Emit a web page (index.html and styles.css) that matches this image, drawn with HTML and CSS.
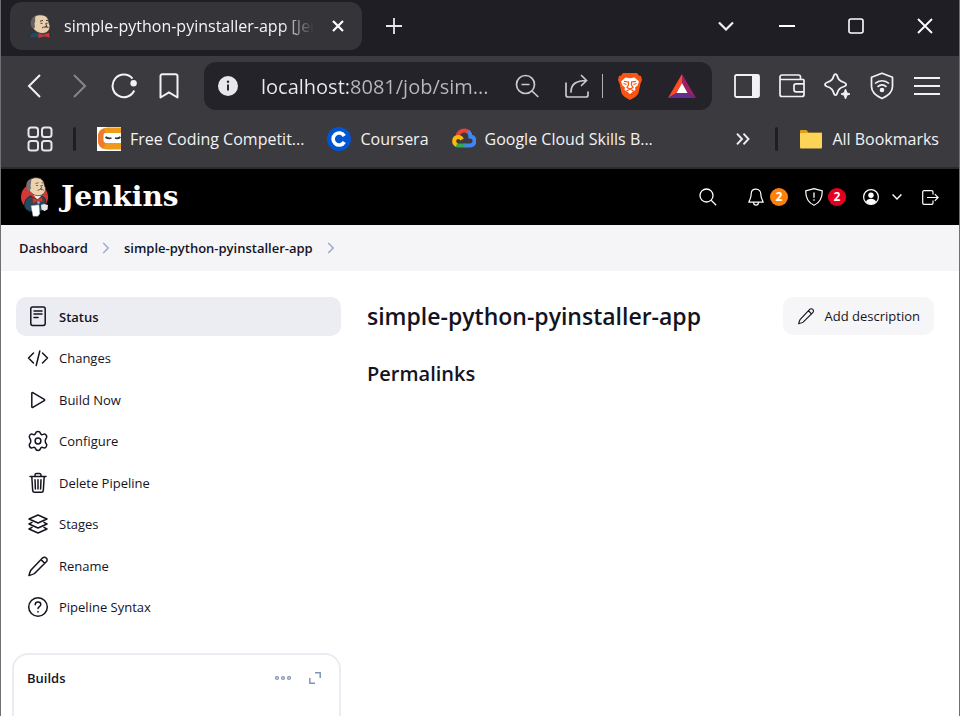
FILE: index.html
```html
<!DOCTYPE html>
<html lang="en">
<head>
<meta charset="utf-8">
<meta name="viewport" content="width=device-width, initial-scale=1">
<title>simple-python-pyinstaller-app [Jenkins]</title>
<link rel="stylesheet" href="styles.css">
</head>
<body>
<div class="window">
  <div class="tabstrip">
    <div class="tab">
      <svg class="favicon" width="24" height="24" viewBox="0 0 24 24" aria-hidden="true">
        <path d="M1 24c0-3 2-5.500 6-6l14 1c2 1 2 3 2 5z" fill="#27485c" stroke="#182a35" stroke-width=".6"/>
        <path d="M4 10C3.500 4 7 .8 12 .8c6 0 8.500 3 8.700 7 .1 1.500 1.500 3 1.200 5.500-.5 3.500-3 6-7 6.200C9 19.500 4.500 16 4 10z" fill="#e8cfae" stroke="#3a3230" stroke-width=".8"/>
        <path d="M3.500 13C1.500 8 3.500 3 7.500 2 6.500 5 8 7 6.500 9.500L7 13l-1.500 2z" fill="#66605e"/>
        <path d="M12 7.200l3-.8m3 0l2 .3M12.500 9.300h2m3.500 0h1.500M14 14c2-1.500 4-1.200 6.500-.5M17.500 9.500l1.500 3-2 .3" stroke="#4b3a34" stroke-width="1" fill="none"/>
        <path d="M10.500 19l4.500 2 6-2.500.5 5-5-1.200-6 1.700z" fill="#d8322f"/>
      </svg>
      <span class="tab-title">simple-python-pyinstaller-app [Jenkins]</span>
      <button class="tab-close" aria-label="Close tab"><svg width="12" height="12" viewBox="0 0 12 12"><path d="M1 1l10 10M11 1L1 11" stroke="#fff" stroke-width="2.200"/></svg></button>
    </div>
    <button class="new-tab" aria-label="New tab"><svg width="16" height="16" viewBox="0 0 16 16"><path d="M8 0v16M0 8h16" stroke="#e8e8ea" stroke-width="1.800"/></svg></button>
    <div class="window-controls">
      <button class="tab-search" aria-label="Search tabs"><svg width="16" height="10" viewBox="0 0 16 10"><path d="M1 1.500l7 7 7-7" fill="none" stroke="#f0f0f2" stroke-width="2.200"/></svg></button>
      <button aria-label="Minimize"><svg width="16" height="2" viewBox="0 0 16 2"><path d="M0 1h16" stroke="#fff" stroke-width="2"/></svg></button>
      <button aria-label="Maximize"><svg width="16" height="16" viewBox="0 0 16 16"><rect x="1" y="1" width="14" height="14" rx="2" fill="none" stroke="#fff" stroke-width="1.600"/></svg></button>
      <button aria-label="Close window"><svg width="16" height="16" viewBox="0 0 16 16"><path d="M1 1l14 14M15 1L1 15" stroke="#fff" stroke-width="1.800"/></svg></button>
    </div>
  </div>

  <div class="toolbar">
    <div class="nav-buttons">
      <button aria-label="Back"><svg width="26" height="26" viewBox="0 0 26 26"><path d="M19 2L8 13l11 11" fill="none" stroke="#f2f2f4" stroke-width="2"/></svg></button>
      <button aria-label="Forward"><svg width="26" height="26" viewBox="0 0 26 26"><path d="M8 2l11 11L8 24" fill="none" stroke="#85858a" stroke-width="2"/></svg></button>
      <button aria-label="Reload"><svg width="26" height="26" viewBox="0 0 26 26"><path d="M21.500 5.600A11.300 11.300 0 1 0 23.200 17.500" fill="none" stroke="#f2f2f4" stroke-width="2"/><circle cx="22.600" cy="10.300" r="3.200" fill="#f2f2f4"/></svg></button>
      <button aria-label="Bookmark this page"><svg width="20" height="26" viewBox="0 0 20 26"><path d="M1.500 24.500V3a1.800 1.800 0 0 1 1.800-1.800h13.400A1.800 1.800 0 0 1 18.500 3v21.500L10 19.300z" fill="none" stroke="#f2f2f4" stroke-width="2" stroke-linejoin="round"/></svg></button>
    </div>
    <div class="omnibox">
      <button class="site-info" aria-label="Site information"><svg width="20" height="20" viewBox="0 0 20 20"><circle cx="10" cy="10" r="10" fill="#e8e8ec"/><path d="M10 8.500v6" stroke="#27272d" stroke-width="2"/><circle cx="10" cy="5.700" r="1.200" fill="#27272d"/></svg></button>
      <input class="url" type="text" value="localhost:8081/job/sim..." aria-label="Address">
      <button aria-label="Zoom out"><svg width="24" height="24" viewBox="0 0 24 24"><g fill="none" stroke="#c9c9cd" stroke-width="1.700"><circle cx="10.500" cy="10.500" r="9"/><path d="M17 17l6.300 6M6.500 10.500h8"/></g></svg></button>
      <button aria-label="Share"><svg width="24" height="24" viewBox="0 0 24 24"><g fill="none" stroke="#c9c9cd" stroke-width="1.700" stroke-linecap="round"><path d="M1 9v12a2 2 0 0 0 2 2h18a2 2 0 0 0 2-2v-3"/><path d="M6 18C6 10 11 6.500 21.500 6.500M16.500 1.500l5 5-5 5"/></g></svg></button>
      <span class="omnibox-divider"></span>
      <button class="shields" aria-label="Brave Shields"><svg width="24" height="28" viewBox="0 0 24 28"><path d="M5 1h14l2 2.500 2 .5 1 4-1.500 3.500-2 9.500c-1 3-5 5-8.500 7-3.500-2-7.500-4-8.500-7l-2-9.500L0 8l1-4 2-.5z" fill="#fb5411"/><path d="M7.500 5.500l4.500.8 4.500-.8L21 9.500l-1.500 4-2.500 2 .5 2.500-2.500 1.500-3 2.500-3-2.500L6.500 18l.5-2.500-2.500-2L3 9.500z" fill="#fff"/><path d="M6 9.300l4.500.7v3l-1.500 2.500 3 1.500 3-1.500-1.500-2.500v-3l4.500-.7M8.500 12.500l-3-1M15.500 12.500l3-1M8.500 19l3.500-2 3.500 2" fill="none" stroke="#fb5411" stroke-width="1.200"/></svg></button>
      <button aria-label="Brave Rewards"><svg width="28" height="24" viewBox="0 0 28 24"><path d="M14 0L0 24l8.500-5L14 9z" fill="#ff4a22"/><path d="M14 0l14 24-8.500-5L14 9z" fill="#9e1f63"/><path d="M0 24h28l-8.500-5h-11z" fill="#662d91"/><path d="M14 9l5.500 10h-11z" fill="#fff"/></svg></button>
    </div>
    <div class="tool-buttons">
      <button aria-label="Sidebar"><svg width="26" height="24" viewBox="0 0 26 24"><rect x="1" y="1" width="24" height="22" rx="1.500" fill="none" stroke="#f2f2f4" stroke-width="1.800"/><path d="M18 1h7v22h-7z" fill="#f2f2f4"/></svg></button>
      <button aria-label="Wallet"><svg width="26" height="24" viewBox="0 0 26 24"><g fill="none" stroke="#f2f2f4" stroke-width="1.700"><path d="M25 5.500v15a2 2 0 0 1-2 2H3a2 2 0 0 1-2-2V3a2 2 0 0 1 2-2h16.500a2 2 0 0 1 2 2v2.500M1 5.500h24M25 9.800h-8a2 2 0 0 0-2 2v4a2 2 0 0 0 2 2h8"/></g></svg></button>
      <button aria-label="Leo AI"><svg width="26" height="26" viewBox="0 0 26 26"><path d="M11.500 1.200c.8 0 1.300.4 1.600 1.300 1.200 4 2.400 5.500 7 7 2.800 1 2.800 3 0 4-4.600 1.500-5.800 3-7 7-.6 2.200-2.600 2.200-3.200 0-1.200-4-2.400-5.500-7-7-2.600-1-2.600-3 0-4 4.600-1.500 5.800-3 7-7 .3-.9.800-1.300 1.600-1.300z" fill="none" stroke="#f2f2f4" stroke-width="1.800"/><path d="M21.500 16l1.300 3.700 3.200 1.300-3.200 1.300-1.300 3.700-1.300-3.700L17 21l3.200-1.300z" fill="#f2f2f4" stroke="#f2f2f4"/></svg></button>
      <button aria-label="VPN"><svg width="24" height="28" viewBox="0 0 24 28"><g fill="none" stroke="#f2f2f4" stroke-width="1.700"><path d="M12 1.200l10.500 4v9.300c0 5.500-5 9.500-10.500 12-5.500-2.500-10.500-6.500-10.500-12V5.200z" stroke-linejoin="round"/><path d="M5 11.500c4-3.700 10-3.700 14 0M7.500 14.800c3-2.500 6-2.500 9 0"/></g><circle cx="12" cy="18" r="2.300" fill="#f2f2f4"/></svg></button>
      <button aria-label="Menu"><svg width="26" height="20" viewBox="0 0 26 20"><path d="M0 2h26M0 10h26M0 18h26" stroke="#f2f2f4" stroke-width="2"/></svg></button>
    </div>
  </div>

  <div class="bookmarks">
    <button class="apps" aria-label="Apps"><svg width="26" height="26" viewBox="0 0 26 26"><g fill="none" stroke="#e6e6e9" stroke-width="2"><rect x="1.500" y="1.500" width="9.500" height="9.500" rx="2.500"/><rect x="15" y="1.500" width="9.500" height="9.500" rx="2.500"/><rect x="1.500" y="15" width="9.500" height="9.500" rx="2.500"/><rect x="15" y="15" width="9.500" height="9.500" rx="2.500"/></g></svg></button>
    <span class="bar-divider"></span>
    <div class="bookmark-list">
      <a class="bookmark" href="#"><svg width="24" height="24" viewBox="0 0 24 24"><path d="M0 0h24v24H0z" fill="#fff"/><path d="M24 .5H11C5 .5 1 4 1 9.500v4.500c0 5 4 8.500 10 8.500h13v-6.500H10c-2 0-3-1-3-3V8.500C7 7 8 6 10 6h14z" fill="#ee9a1d"/><path d="M7 1.500C3 3 1 5.500 1 9.500v4.500c0 3.500 2 6 5 7.500l3-6q-2-.5-2-3V8.500Q7 7 8.500 6.200z" fill="#ed7b2d"/><path d="M6.500 8q0-2 2-2H24v10H9.500q-3 0-3-3z" fill="#fff"/><path d="M8.500 10q2.500 2 6 1M23.500 10q-2.500 2-5.500 1" stroke="#333" stroke-width="1.700" fill="none"/></svg>Free Coding Competit...</a>
      <a class="bookmark" href="#"><svg width="24" height="24" viewBox="0 0 24 24"><circle cx="12" cy="12" r="12" fill="#0056d2"/><path d="M17.300 9A6 6 0 1 0 17.300 15" fill="none" stroke="#fff" stroke-width="3.600"/></svg>Coursera</a>
      <a class="bookmark" href="#"><svg width="24" height="24" viewBox="0 0 24 24"><g fill="none" stroke-width="4"><path d="M5.700 8.700A6.800 6.800 0 0 1 16.600 5" stroke="#ea4335"/><path d="M16 4.300a7 7 0 0 1 2.400 5.200 4.400 4.400 0 0 1-.4 8.900H12" stroke="#4285f4"/><path d="M12.500 18.400H6.300a4 4 0 0 1-2.500-.8" stroke="#34a853"/><path d="M4.600 17.900a4.100 4.100 0 0 1 1.200-7.800c2-.2 3.400.8 4.200 2.400" stroke="#fbbc05"/></g></svg>Google Cloud Skills B...</a>
    </div>
    <button class="overflow" aria-label="More bookmarks"><svg width="14" height="12" viewBox="0 0 14 12"><path d="M1 .7L6 6l-5 5.300M7.500.7l5 5.300-5 5.300" fill="none" stroke="#f0f0f2" stroke-width="1.900"/></svg></button>
    <span class="bar-divider"></span>
    <a class="bookmark" href="#"><svg width="24" height="20" viewBox="0 0 24 20"><path d="M1 3V2a1 1 0 0 1 1-1h5.500l2 2.500H23V10H1z" fill="#dba01a"/><rect x="1" y="4" width="22" height="15.500" rx="1" fill="#fdd457"/></svg>All Bookmarks</a>
  </div>

  <header class="jenkins-header">
    <a class="brand" href="#">
      <svg width="30" height="40" viewBox="0 0 30 40" aria-hidden="true">
        <circle cx="14.500" cy="20" r="13.500" fill="#d33833"/>
        <path d="M4.500 29c0-5 1.500-8 6-10l5 3 6-3c3.500 1 4.500 4 4.500 8l-1 4-4 3-9 .5c-4 0-7-2-7.500-5.500z" fill="#264a5e" stroke="#10222d" stroke-width=".8"/>
        <path d="M13.500 18l4 5 4-4.500z" fill="#f4f4f4"/>
        <path d="M8 8C8 3 12 .7 16 .7c5 0 8 2.800 8.300 7 .1 1.500 1.700 3 1.200 5.300-.6 3-3 5.500-6.500 5.700-6 .2-10.500-3.700-11-10.700z" fill="#ecd2af" stroke="#4a3a34" stroke-width=".7"/>
        <path d="M7 12C5 7 7.500 2 12 1.500 10.500 4 11.500 6 10.500 8.500L11 11l-2 4z" fill="#77706e"/>
        <path d="M15.500 6.500l3-.8m3 0l2 .3M16 8.500h2m3.200 0h1.800M17.500 13.500c2-1.300 4-1.200 6.500-.4M20.500 8.500l1.500 2.700-2 .4" stroke="#5a463b" stroke-width=".8" fill="none"/>
        <path d="M12.500 20.500l4.500 2 5-2.500.8 5-5.300-1-4.500 2.800z" fill="#d33833" stroke="#81201f" stroke-width=".5"/>
        <path d="M11 28.800l8-1 .8 9-1.800 2.400h-5z" fill="#fff" stroke="#999" stroke-width=".4"/>
        <path d="M21 28l3-1 4 1-.5 4.500-3 1.500-3-1.500z" fill="#e9e9ea"/>
        <circle cx="18.500" cy="25.500" r="1.400" fill="#8ca3b0"/>
      </svg>
      <span>Jenkins</span>
    </a>
    <nav class="header-actions" aria-label="Header">
      <button class="search" aria-label="Search"><svg width="18" height="18" viewBox="0 0 18 18"><g fill="none" stroke="#fff" stroke-width="1.300"><circle cx="7.500" cy="7.500" r="6.500"/><path d="M12.200 12.200l5 5"/></g></svg></button>
      <a class="notice" href="#"><svg width="18" height="18" viewBox="0 0 18 18"><path d="M9 1.200c-3 0-4.800 2-4.800 4.800 0 4-1.500 5.500-2.400 8.200h14.400c-.9-2.700-2.400-4.200-2.400-8.200C13.800 3.200 12 1.200 9 1.200zM6.600 14.800a2.400 2.400 0 0 0 4.800 0" fill="none" stroke="#fff" stroke-width="1.200" stroke-linejoin="round"/></svg><span class="badge">2</span></a>
      <a class="notice" href="#"><svg width="18" height="18" viewBox="0 0 18 18"><path d="M9 .7l8.300 2.100C17.300 10 15.500 14.500 9 17.300 2.500 14.500.7 10 .7 2.800z" fill="none" stroke="#fff" stroke-width="1.200" stroke-linejoin="round"/><path d="M9 4.500v5.200M9 11.200v1.500" stroke="#fff" stroke-width="1.300"/></svg><span class="badge badge-security">2</span></a>
      <button class="user" aria-label="User menu"><svg width="16" height="16" viewBox="0 0 16 16"><circle cx="8" cy="8" r="7.400" fill="none" stroke="#fff" stroke-width="1.200"/><circle cx="8" cy="6.300" r="2.700" fill="#fff"/><path d="M3 12.800c1-4 9-4 10 0A7 7 0 0 1 8 15.400a7 7 0 0 1-5-2.600z" fill="#fff"/></svg><svg width="10" height="6" viewBox="0 0 10 6"><path d="M.6.600L5 5 9.400.6" fill="none" stroke="#fff" stroke-width="1.400"/></svg></button>
      <a class="logout" href="#" aria-label="Log out"><svg width="17" height="15" viewBox="0 0 17 15"><path d="M11 4.500V2A1.300 1.300 0 0 0 9.700.7H2A1.300 1.300 0 0 0 .7 2v11A1.300 1.300 0 0 0 2 14.300h7.700A1.300 1.300 0 0 0 11 13v-2.500M5 7.500h11M12.800 4.200l3.300 3.300-3.300 3.300" fill="none" stroke="#fff" stroke-width="1.200"/></svg></a>
    </nav>
  </header>

  <nav class="breadcrumbs" aria-label="Breadcrumbs">
    <a href="#">Dashboard</a>
    <svg width="8" height="12" viewBox="0 0 8 12"><path d="M1.200 1l5 5-5 5" fill="none" stroke="#98a9c4" stroke-width="1.400"/></svg>
    <a href="#">simple-python-pyinstaller-app</a>
    <svg width="8" height="12" viewBox="0 0 8 12"><path d="M1.200 1l5 5-5 5" fill="none" stroke="#98a9c4" stroke-width="1.400"/></svg>
  </nav>

  <div class="page">
    <aside class="side-panel">
      <nav class="tasks" aria-label="Tasks">
        <a class="task task-active" href="#"><svg width="22" height="22" viewBox="0 0 22 22"><rect x="3.800" y="1" width="14.400" height="18.400" rx="1.800"/><path d="M7 5h8M7 8h8M7 11.500h4"/></svg>Status</a>
        <a class="task" href="#"><svg width="22" height="22" viewBox="0 0 22 22"><path d="M6.500 6L1.500 11l5 5M15.500 6l5 5-5 5M12.800 4L9.200 18.500"/></svg>Changes</a>
        <a class="task" href="#"><svg width="22" height="22" viewBox="0 0 22 22"><path d="M4.800 4.200v13.600c0 .6.500.9 1 .6l11.500-6.800c.5-.3.500-.9 0-1.200L5.800 3.600c-.5-.3-1 0-1 .6z"/></svg>Build Now</a>
        <a class="task" href="#"><svg width="22" height="22" viewBox="0 0 22 22"><circle cx="11" cy="11" r="2.900"/><path d="M8.600 3.200C9 1.600 9.600 1.500 11 1.500s2 .1 2.400 1.700c.3 1.200 1.500 1.800 2.700 1.200 1.500-.8 2.400-.4 3.300 1.100.8 1.400.7 2-.4 3.100-1 1-1 3.800 0 4.800 1.100 1.100 1.200 1.700.4 3.100-.9 1.500-1.800 1.900-3.300 1.100-1.200-.6-2.400 0-2.700 1.200-.4 1.600-1 1.700-2.400 1.700s-2-.1-2.400-1.700c-.3-1.200-1.500-1.800-2.700-1.200-1.500.8-2.400.4-3.300-1.100-.8-1.400-.7-2 .4-3.100 1-1 1-3.800 0-4.800C1.900 7.500 1.800 6.900 2.600 5.500c.9-1.500 1.800-1.900 3.300-1.100 1.200.6 2.400 0 2.700-1.200z"/></svg>Configure</a>
        <a class="task" href="#"><svg width="22" height="22" viewBox="0 0 22 22"><path d="M3 4.500h16M4.800 4.700l.9 14a1.800 1.800 0 0 0 1.800 1.600h7a1.800 1.800 0 0 0 1.800-1.600l.9-14M8 4.300V3a1.500 1.500 0 0 1 1.500-1.500h3A1.500 1.500 0 0 1 14 3v1.300M8 7.700l.4 9.300M11 7.700V17M14 7.700l-.4 9.300"/></svg>Delete Pipeline</a>
        <a class="task" href="#"><svg width="22" height="22" viewBox="0 0 22 22"><path d="M11 2l9 4-9 4-9-4zM5 9.300L2 11l9 4 9-4-3-1.700M5 14.300L2 16l9 4 9-4-3-1.700"/></svg>Stages</a>
        <a class="task" href="#"><svg width="22" height="22" viewBox="0 0 22 22"><path d="M15.500 3a2.600 2.600 0 0 1 3.800 0 2.600 2.600 0 0 1 0 3.800L7.500 18.500c-1.500 1-3.500 1.500-5.500 2 .5-2 1-4 2-5.500zM14 4.600l3.700 3.700"/></svg>Rename</a>
        <a class="task" href="#"><svg width="22" height="22" viewBox="0 0 22 22"><circle cx="11" cy="11" r="9.300"/><path d="M8.200 8.800c0-1.700 1.200-2.700 2.800-2.700s2.800 1 2.800 2.500c0 2-2.800 2-2.800 4M11 15.500v.5"/></svg>Pipeline Syntax</a>
      </nav>
      <section class="builds">
        <h2>Builds</h2>
        <button aria-label="Build actions"><svg width="16" height="6" viewBox="0 0 16 6"><g fill="none" stroke="#8195b5" stroke-width="1.300"><circle cx="2" cy="3" r="1.400"/><circle cx="8" cy="3" r="1.400"/><circle cx="14" cy="3" r="1.400"/></g></svg></button>
        <button aria-label="Expand builds"><svg width="12" height="12" viewBox="0 0 12 12"><path d="M6 .8h5.200V6M6 11.200H.8V6" fill="none" stroke="#8195b5" stroke-width="1.500"/></svg></button>
      </section>
    </aside>
    <main class="content">
      <div class="title-bar">
        <h1>simple-python-pyinstaller-app</h1>
        <button class="add-description"><svg width="18" height="18" viewBox="0 0 22 22"><path d="M15.500 3a2.600 2.600 0 0 1 3.800 0 2.600 2.600 0 0 1 0 3.800L7.500 18.500c-1.500 1-3.500 1.500-5.500 2 .5-2 1-4 2-5.500zM14 4.600l3.700 3.700"/></svg>Add description</button>
      </div>
      <h2>Permalinks</h2>
    </main>
  </div>
</div>
</body>
</html>
```
FILE: styles.css
```css
* {
  box-sizing: border-box;
}

body {
  margin: 0;
  font-family: "Open Sans", "Noto Sans", sans-serif;
  color: #14141f;
  background: #fff;
}

a {
  color: inherit;
  text-decoration: none;
}

button {
  display: flex;
  flex: none;
  align-items: center;
  justify-content: center;
  padding: 0;
  border: 0;
  background: none;
  font: inherit;
  color: inherit;
}

svg {
  display: block;
  flex: none;
}

h1,
h2 {
  margin: 0;
  font-weight: 600;
}

.window {
  display: flex;
  flex-direction: column;
  min-height: 100vh;
  border: solid #707073;
  border-width: 0 1px;
}

/* Browser tabs */
.tabstrip {
  display: flex;
  align-items: center;
  height: 56px;
  padding: 0 0 4px 9px;
  background: #1f1e24;
}

.tab {
  display: flex;
  align-items: center;
  width: 352px;
  height: 48px;
  padding: 0 12px 0 18px;
  border-radius: 12px;
  background: #353439;
  color: #f4f4f6;
  font-size: 16px;
}

.tab-title {
  flex: 1;
  margin-left: 12px;
  overflow: hidden;
  white-space: nowrap;
  mask-image: linear-gradient(to left, transparent, #000 32px);
}

.tab-close {
  width: 24px;
  height: 24px;
  margin-left: 12px;
}

.new-tab {
  width: 64px;
  height: 48px;
}

.window-controls {
  display: flex;
  margin-left: auto;
}

.window-controls button {
  width: 69px;
  height: 48px;
}

.window-controls .tab-search {
  width: 52px;
}

/* Navigation toolbar */
.toolbar {
  display: flex;
  align-items: center;
  height: 60px;
  padding: 0 10px;
  background: #3b3a3f;
}

.nav-buttons,
.tool-buttons {
  display: flex;
}

.nav-buttons button,
.tool-buttons button {
  width: 45px;
  height: 45px;
}

.omnibox {
  display: flex;
  flex: 1;
  align-items: center;
  min-width: 0;
  height: 48px;
  margin: 0 12px 0 13px;
  padding: 0 5px 0 14px;
  border-radius: 12px;
  background: #242329;
}

.omnibox button {
  width: 50px;
  height: 40px;
}

.omnibox .site-info {
  width: 20px;
}

.omnibox .shields {
  width: 54px;
}

.url {
  flex: 1;
  min-width: 0;
  margin-left: 23px;
  padding: 0;
  border: 0;
  outline: 0;
  background: linear-gradient(to right, #ececf0 88px, #b9b9c0 88px);
  background-clip: text;
  color: transparent;
  font: 20px "Open Sans", "Noto Sans", sans-serif;
}

.omnibox-divider {
  width: 1px;
  height: 24px;
  background: #b0b0b5;
}

/* Bookmarks bar */
.bookmarks {
  display: flex;
  align-items: center;
  height: 53px;
  padding: 0 20px 6px 26px;
  border-bottom: 2px solid #2b2a2f;
  background: #3b3a3f;
  color: #f2f2f4;
  font-size: 16px;
}

.bar-divider {
  flex: none;
  width: 3px;
  height: 24px;
  margin: 0 21px 0 20px;
  border-radius: 2px;
  background: #1f1e24;
}

.bookmark-list {
  display: flex;
  flex: 1;
  gap: 23px;
  min-width: 0;
}

.bookmark {
  display: flex;
  align-items: center;
  gap: 9px;
  white-space: nowrap;
}

.overflow {
  width: 24px;
  height: 24px;
}

/* Jenkins header */
.jenkins-header {
  display: flex;
  align-items: center;
  justify-content: space-between;
  height: 56px;
  padding: 0 20px 0 19px;
  background: #000;
  color: #fff;
}

.brand {
  display: flex;
  align-items: center;
  gap: 11px;
  font: bold 28px/40px "DejaVu Serif", serif;
}

.header-actions {
  display: flex;
  align-items: center;
}

.search {
  margin-right: 30px;
}

.notice {
  display: flex;
  align-items: center;
  gap: 5px;
  margin-right: 17px;
}

.badge {
  width: 18px;
  height: 18px;
  border-radius: 9px;
  background: #fe820a;
  font-size: 12px;
  font-weight: 700;
  line-height: 18px;
  text-align: center;
}

.badge-security {
  background: #e6001f;
}

.user {
  gap: 13px;
  margin-right: 20px;
}

/* Breadcrumbs */
.breadcrumbs {
  display: flex;
  align-items: center;
  gap: 14px;
  height: 46px;
  padding: 0 18px;
  background: #f5f5f8;
  font-size: 13px;
  font-weight: 600;
}

/* Page body */
.page {
  display: flex;
  flex: 1;
  gap: 26px;
  padding: 26px 25px 0 11px;
}

.side-panel {
  display: flex;
  flex: none;
  flex-direction: column;
  gap: 26px;
  width: 329px;
}

.tasks {
  display: flex;
  flex-direction: column;
  justify-content: space-between;
  min-height: 330px;
  padding-left: 4px;
}

.task {
  display: flex;
  align-items: center;
  gap: 10px;
  height: 39px;
  padding: 0 11px;
  border-radius: 10px;
  font-size: 13px;
}

.task svg,
.add-description svg {
  fill: none;
  stroke: #14141f;
  stroke-width: 1.5;
  stroke-linejoin: round;
  stroke-linecap: round;
}

.task-active {
  background: #ecedf3;
  font-weight: 600;
}

.builds {
  display: flex;
  flex: 1;
  align-items: flex-start;
  gap: 8px;
  padding: 11px 12px 0 13px;
  border: 2px solid #ebebf3;
  border-bottom: 0;
  border-radius: 16px 16px 0 0;
}

.builds h2 {
  flex: 1;
  font-size: 13px;
  line-height: 24px;
}

.builds button {
  width: 24px;
  height: 24px;
}

.content {
  flex: 1;
  min-width: 0;
}

.title-bar {
  display: flex;
  align-items: center;
  justify-content: space-between;
  margin-bottom: 24px;
}

.title-bar h1 {
  font-size: 23px;
  line-height: 38px;
}

.content h2 {
  font-size: 20px;
  line-height: 30px;
}

.add-description {
  gap: 10px;
  height: 38px;
  padding: 0 14px;
  border-radius: 10px;
  background: #f6f6f9;
  font-size: 13px;
}

.add-description svg {
  stroke-width: 1.4;
}
```
